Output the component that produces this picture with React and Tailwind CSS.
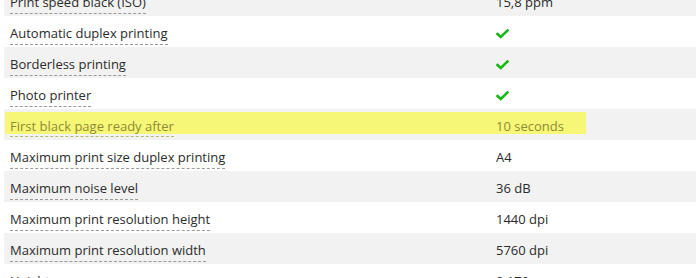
// Printer spec table (partial, scrolled)
const ROWS = [
  { label: 'Print speed black (ISO)', value: '15,8 ppm' },
  { label: 'Automatic duplex printing', check: true },
  { label: 'Borderless printing', check: true },
  { label: 'Photo printer', check: true },
  { label: 'First black page ready after', value: '10 seconds', highlight: true },
  { label: 'Maximum print size duplex printing', value: 'A4' },
  { label: 'Maximum noise level', value: '36 dB' },
  { label: 'Maximum print resolution height', value: '1440 dpi' },
  { label: 'Maximum print resolution width', value: '5760 dpi' },
  { label: 'Height', value: '0,170 m' },
];

function Check() {
  return (
    <svg width="13" height="10" viewBox="0 0 13 10" aria-hidden="true" className="mt-[-2px]">
      <polyline points="1.5,5 4.8,8 11.5,1.5" fill="none" stroke="#16b816" strokeWidth="2.6" strokeLinecap="square" />
    </svg>
  );
}

function Label({ children, muted }) {
  return (
    <span
      className={`inline-block leading-normal border-b border-dashed ${
        muted ? 'border-[#b8b870] text-[#8d8a35]' : 'border-[#9a9a9a] text-[#2b2b2b]'
      }`}
    >
      {children}
    </span>
  );
}

export default function App() {
  return (
    <div className="w-[696px] h-[278px] overflow-hidden bg-white font-['Open_Sans',sans-serif] text-[13px]">
      <div className="mt-[-15px] pl-[4px]">
        {ROWS.map((row, idx) => {
          const bg = idx % 2 === 0 ? 'bg-[#f2f2f2]' : 'bg-white';
          if (row.highlight) {
            return (
              <div key={row.label} className={`h-[31px] pt-[3px] pl-px ${bg}`}>
                <div className="h-[22px] w-[581px] bg-[#f7f777] flex items-end">
                  <div className="w-[491px] pl-[5px] shrink-0 mb-[-3px]">
                    <Label muted>{row.label}</Label>
                  </div>
                  <span className="leading-normal pb-px mb-[-3px] text-[#8d8a35]">{row.value}</span>
                </div>
              </div>
            );
          }
          return (
            <div key={row.label} className={`h-[31px] pt-[6px] flex items-center ${bg}`}>
              <div className="w-[492px] pl-[6px] shrink-0">
                <Label>{row.label}</Label>
              </div>
              {row.check ? <Check /> : <span className="leading-normal pb-px text-[#2b2b2b]">{row.value}</span>}
            </div>
          );
        })}
      </div>
    </div>
  );
}
